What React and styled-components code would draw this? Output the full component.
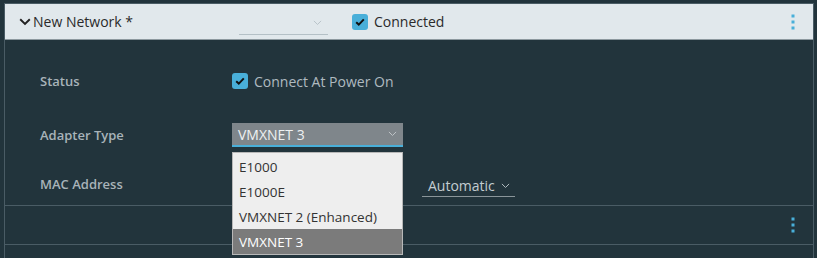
import React from 'react';
import styled, { createGlobalStyle } from 'styled-components';

const GlobalStyle = createGlobalStyle`
    body {
        margin: 0;
        background: #22343c;
        font-family: "Open Sans", "Liberation Sans", sans-serif;
    }
`;

const adapterTypes = ["E1000", "E1000E", "VMXNET 2 (Enhanced)", "VMXNET 3"];

const Chevron = ({ size = 10, color = "#333", strokeWidth = 1.5 }) =>
(
    <svg width={size} height={size * 0.6} viewBox="0 0 10 6" fill="none">
        <path d="M1 1l4 4 4-4" stroke={color} strokeWidth={strokeWidth} />
    </svg>
);

const Check = () =>
(
    <svg width="10" height="8" viewBox="0 0 10 8" fill="none">
        <path d="M1.2 4.2l2.6 2.4L8.8 1.4" stroke="#111" strokeWidth="2" />
    </svg>
);

const App = () =>
{
    return (<Page>
        <GlobalStyle />
        <Panel>
            <Header>
                <Title>
                    <Chevron size={12} color="#222" strokeWidth={1.6} />
                    <span>New Network *</span>
                </Title>
                <HeaderSelect>
                    <Chevron size={9} color="#b4c0c6" strokeWidth={1} />
                </HeaderSelect>
                <CheckLabel>
                    <Box><Check /></Box>
                    Connected
                </CheckLabel>
                <Kebab><i /><i /><i /></Kebab>
            </Header>
            <Body>
                <Row height={50}>
                    <Label>Status</Label>
                    <CheckLabel light>
                        <Box><Check /></Box>
                        Connect At Power On
                    </CheckLabel>
                </Row>
                <Row height={58}>
                    <Label>Adapter Type</Label>
                    <SelectWrap>
                        <Select>
                            <span>VMXNET 3</span>
                            <Chevron size={9} color="#c6cbce" strokeWidth={1} />
                        </Select>
                        <Menu>
                            {adapterTypes.map(t => (
                                <Option key={t} selected={t === "VMXNET 3"}>{t}</Option>
                            ))}
                        </Menu>
                    </SelectWrap>
                </Row>
                <Row height={40}>
                    <Label>MAC Address</Label>
                    <Spacer />
                    <AutoSelect>
                        Automatic
                        <Chevron size={9} color="#c0c9ce" strokeWidth={1} />
                    </AutoSelect>
                </Row>
            </Body>
            <SubRow>
                <Kebab><i /><i /><i /></Kebab>
            </SubRow>
            <Tail />
        </Panel>
    </Page>);
};

export default App;

const Page = styled.div`
    width: 817px;
    height: 258px;
    overflow: hidden;
    padding-top: 3px;
    box-sizing: border-box;
`;

const Panel = styled.div`
    margin-left: 4px;
    width: 810px;
    border-left: 1px solid #4a5c65;
    border-right: 1px solid #4a5c65;
    box-sizing: border-box;
    height: 260px;
`;

const Header = styled.div`
    height: 37px;
    background: #e1e8ec;
    border-top: 1px solid #4a5c65;
    border-bottom: 1px solid #8d999f;
    box-sizing: border-box;
    display: flex;
    align-items: center;
    padding-left: 14px;
    font-size: 14px;
    color: #2a2a2a;
`;

const Title = styled.div`
    display: flex;
    align-items: center;
    gap: 2px;
    width: 220px;
    svg { margin-top: 1px; }
`;

const HeaderSelect = styled.div`
    width: 89px;
    height: 22px;
    margin-top: 4px;
    border-bottom: 1px solid #b4c0c6;
    display: flex;
    align-items: center;
    justify-content: flex-end;
    padding-right: 6px;
    box-sizing: border-box;
    margin-right: 24px;
`;

const CheckLabel = styled.label`
    display: flex;
    align-items: center;
    gap: 6px;
    font-size: 14px;
    color: ${p => p.light ? "#afbac0" : "#2a2a2a"};
`;

const Box = styled.span`
    width: 16px;
    height: 16px;
    border-radius: 3px;
    background: #49afd9;
    display: inline-flex;
    align-items: center;
    justify-content: center;
`;

const Kebab = styled.div`
    margin-left: auto;
    margin-right: 19px;
    display: flex;
    flex-direction: column;
    gap: 4px;
    i {
        width: 2px;
        height: 2px;
        background: #49afd9;
        box-shadow: 0 0 0 0.5px #49afd9;
        display: block;
    }
`;

const Body = styled.div`
    padding: 16px 0 0 35px;
    height: 166px;
    box-sizing: border-box;
    border-bottom: 1px solid #4a5c65;
`;

const Row = styled.div`
    height: ${p => p.height}px;
    display: flex;
    align-items: center;
`;

const Label = styled.div`
    width: 192px;
    font-size: 13px;
    font-weight: 600;
    color: #a8b3b9;
`;

const SelectWrap = styled.div`
    position: relative;
    width: 171px;
`;

const Select = styled.div`
    height: 24px;
    background: #7f868b;
    border-bottom: 2px solid #49afd9;
    box-sizing: border-box;
    display: flex;
    align-items: center;
    justify-content: space-between;
    padding: 0 6px 0 6px;
    font-size: 14px;
    color: #eef1f2;
`;

const Menu = styled.div`
    position: absolute;
    top: 29px;
    left: 0;
    width: 171px;
    background: #eeeeee;
    border: 1px solid #b8b8b8;
    box-sizing: border-box;
    padding-top: 1px;
    z-index: 2;
`;

const Option = styled.div`
    height: 25px;
    display: flex;
    align-items: center;
    padding-left: 6px;
    font-size: 13.5px;
    color: ${p => p.selected ? "#ffffff" : "#333333"};
    background: ${p => p.selected ? "#7b7b7b" : "transparent"};
`;

const Spacer = styled.div`
    width: 190px;
`;

const AutoSelect = styled.div`
    width: 93px;
    height: 22px;
    margin-top: 4px;
    border-bottom: 1px solid #8a959a;
    box-sizing: border-box;
    display: flex;
    align-items: center;
    gap: 6px;
    padding-left: 6px;
    font-size: 14px;
    color: #c3ccd1;
`;

const SubRow = styled.div`
    height: 39px;
    display: flex;
    align-items: center;
    border-bottom: 1px solid #4a5c65;
    box-sizing: border-box;
`;

const Tail = styled.div`
    height: 20px;
`;
